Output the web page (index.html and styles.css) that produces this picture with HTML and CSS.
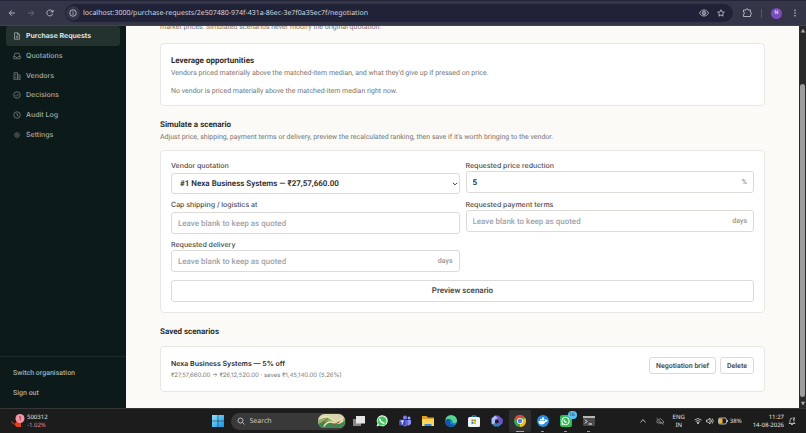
FILE: index.html
```html
<!DOCTYPE html>
<html lang="en">
<head>
<meta charset="utf-8">
<title>Negotiation</title>
<link rel="stylesheet" href="styles.css">
</head>
<body>
<header class="toolbar">
  <div class="history">
    <button class="tool" aria-label="Back"><svg class="ic8" viewBox="0 0 16 16"><path d="M14 8H2.500M8 2.500 2.500 8 8 13.500"/></svg></button>
    <button class="tool dim" aria-label="Forward"><svg class="ic8" viewBox="0 0 16 16"><path d="M2 8h11.500M8 2.500 13.500 8 8 13.500"/></svg></button>
    <button class="tool" aria-label="Reload"><svg class="ic8" viewBox="0 0 16 16"><path d="M13.500 9.500A6 6 0 1 1 12.500 4.200L14 6M14 1.500V6H9.500"/></svg></button>
  </div>
  <div class="address">
    <button class="site-info" aria-label="Site information"><svg class="ic8" viewBox="0 0 16 16"><circle cx="8" cy="8" r="6.500"/><path d="M8 7v4.500M8 4v1.500"/></svg></button>
    <input class="url" aria-label="Address" value="localhost:3000/purchase-requests/2e507480-974f-431a-86ec-3e7f0a35ec7f/negotiation">
    <button class="tool" aria-label="Page view"><svg class="ic10" viewBox="0 0 20 16"><path d="M1 8c4-8 14-8 18 0-4 8-14 8-18 0Z"/><circle cx="10" cy="8" r="3.500"/><circle cx="10" cy="8" r="1"/></svg></button>
    <button class="tool" aria-label="Bookmark"><svg class="ic8" viewBox="0 0 16 16"><path d="m8 1.500 2 4.400 4.800.5-3.600 3.200 1 4.700L8 11.900l-4.200 2.400 1-4.700L1.200 6.400 6 5.900Z"/></svg></button>
  </div>
  <button class="tool" aria-label="Extensions"><svg class="ic10" viewBox="0 0 20 20"><path d="M3 4h5V3.500a2 2 0 0 1 4 0V4h5v5a2 2 0 0 1 0 4v4H3v-4.500a2 2 0 0 0 0-4Z"/></svg></button>
  <span class="divider"></span>
  <button class="avatar" aria-label="Profile">N</button>
  <button class="tool" aria-label="Menu"><svg class="ic8 solid" viewBox="0 0 16 16"><circle cx="8" cy="2.500" r="1.500"/><circle cx="8" cy="8" r="1.500"/><circle cx="8" cy="13.500" r="1.500"/></svg></button>
</header>

<div class="app">
  <aside class="sidebar">
    <nav class="nav">
      <a class="nav-link active" href="#"><svg class="ic8" viewBox="0 0 16 16"><path d="M3 1.500h6.500L13 5v9.500H3ZM9 1.500V5.500h4M5.500 8.500h5M5.500 11.500h5"/></svg>Purchase Requests</a>
      <a class="nav-link" href="#"><svg class="ic8" viewBox="0 0 16 16"><path d="M1.500 9 4 2.500h8L14.500 9v4.500h-13ZM1.500 9h4l1 2h3l1-2h4"/></svg>Quotations</a>
      <a class="nav-link" href="#"><svg class="ic8" viewBox="0 0 16 16"><path d="M2 14.500v-13h7v13M9 6h5v8.500M1 14.500h14M4.500 5h2M4.500 8h2M4.500 11h2M11.500 9v3"/></svg>Vendors</a>
      <a class="nav-link" href="#"><svg class="ic8" viewBox="0 0 16 16"><circle cx="8" cy="8" r="6.500"/><path d="m5 8.500 2 2L11 6"/></svg>Decisions</a>
      <a class="nav-link" href="#"><svg class="ic8" viewBox="0 0 16 16"><circle cx="8" cy="8" r="6.500"/><path d="M8 4v4.500l3 1.500"/></svg>Audit Log</a>
      <a class="nav-link" href="#"><svg class="ic8 thin" viewBox="0 0 16 16"><circle cx="8" cy="8" r="4"/><circle cx="8" cy="8" r="1.500"/><path d="M8 1.500V4M8 12v2.500M1.500 8H4M12 8h2.500M3.400 3.400l1.800 1.800M10.800 10.800l1.800 1.800M3.400 12.600l1.800-1.800M10.800 5.200l1.800-1.800"/></svg>Settings</a>
    </nav>
    <div class="account">
      <button class="account-link">Switch organisation</button>
      <button class="account-link">Sign out</button>
    </div>
  </aside>

  <main class="page">
    <p class="muted intro">market prices. Simulated scenarios never modify the original quotation.</p>

    <section class="card leverage">
      <h2>Leverage opportunities</h2>
      <p class="muted">Vendors priced materially above the matched-item median, and what they'd give up if pressed on price.</p>
      <p class="muted empty">No vendor is priced materially above the matched-item median right now.</p>
    </section>

    <div class="heading">
      <h2>Simulate a scenario</h2>
      <p class="muted">Adjust price, shipping, payment terms or delivery, preview the recalculated ranking, then save if it's worth bringing to the vendor.</p>
    </div>

    <form class="card scenario">
      <div class="field spaced">
        <label for="vendor">Vendor quotation</label>
        <div class="control select-control">
          <select id="vendor"><option>#1 Nexa Business Systems — ₹27,57,660.00</option></select>
          <svg class="chevron" viewBox="0 0 10 10"><path d="m1.500 3 3.500 3.500L8.500 3"/></svg>
        </div>
      </div>
      <div class="field">
        <label for="price">Requested price reduction</label>
        <div class="control"><input id="price" value="5"><span class="unit">%</span></div>
      </div>
      <div class="field spaced">
        <label for="shipping">Cap shipping / logistics at</label>
        <div class="control"><input id="shipping" placeholder="Leave blank to keep as quoted"></div>
      </div>
      <div class="field">
        <label for="terms">Requested payment terms</label>
        <div class="control"><input id="terms" placeholder="Leave blank to keep as quoted"><span class="unit">days</span></div>
      </div>
      <div class="field">
        <label for="delivery">Requested delivery</label>
        <div class="control"><input id="delivery" placeholder="Leave blank to keep as quoted"><span class="unit">days</span></div>
      </div>
      <button class="btn preview" type="button">Preview scenario</button>
    </form>

    <h2 class="saved-title">Saved scenarios</h2>

    <section class="card saved">
      <div class="saved-text">
        <h3>Nexa Business Systems — 5% off</h3>
        <p class="muted small">₹27,57,660.00 → ₹26,12,520.00 · saves ₹1,45,140.00 (5.26%)</p>
      </div>
      <button class="btn">Negotiation brief</button>
      <button class="btn">Delete</button>
    </section>
  </main>

  <div class="scrollbar">
    <svg class="arrow" viewBox="0 0 8 8"><path d="M4 1.500 7 6.500H1Z"/></svg>
    <span class="thumb"></span>
    <svg class="arrow" viewBox="0 0 8 8"><path d="M4 6.500 7 1.500H1Z"/></svg>
  </div>
</div>

<footer class="taskbar">
  <button class="widget" aria-label="Market widget">
    <svg class="stock" viewBox="0 0 28 28"><path d="m0 13 7 7 4-5 9 1v10H11l-3-4-6-4Z" fill="#d8431b"/><circle cx="18" cy="9" r="9" fill="#f596a5"/><path d="M16 6.500 18.500 5v8" stroke="#7d2536" stroke-width="1.500" fill="none"/></svg>
    <span class="widget-text"><span>500312</span><span class="down">-1.02%</span></span>
  </button>

  <div class="apps">
    <button class="app-icon" aria-label="Start"><svg viewBox="0 0 24 24"><defs><linearGradient id="win" x2="1" y2="1"><stop stop-color="#8be3fb"/><stop offset="1" stop-color="#1593e8"/></linearGradient></defs><path fill="url(#win)" d="M0 0h11.500v11.500H0ZM12.500 0H24v11.500H12.500ZM0 12.500h11.500V24H0ZM12.500 12.500H24V24H12.500Z"/></svg></button>
    <label class="search">
      <svg class="ic8" viewBox="0 0 16 16"><circle cx="7" cy="7" r="5"/><path d="m11 11 4 4"/></svg>
      <input placeholder="Search" aria-label="Search">
      <svg class="scene" viewBox="0 0 54 28"><defs><clipPath id="pill"><rect width="54" height="28" rx="13"/></clipPath></defs><g clip-path="url(#pill)"><path fill="#d9d4b0" d="M0 0h54v28H0Z"/><path fill="#8db56a" d="M0 13Q14 3 28 10T54 8v20H0Z"/><path fill="#3f8650" d="M0 20q16-9 30-3t24-4v15H0Z"/><path d="M6 8q12-7 21 2T50 8M12 25q6-12 19-8t19-5" fill="none" stroke="#efe5b9" stroke-width="3"/><path d="m8 17 12-8M30 22l13-6" stroke="#b84430" stroke-width="2"/></g></svg>
    </label>
    <button class="app-icon" aria-label="Task view"><svg viewBox="0 0 24 24"><path fill="#858585" d="M0 8h16v14H0Z"/><path fill="#e5e5e5" d="M6 2h18v15H6Z"/></svg></button>
    <button class="app-icon" aria-label="WhatsApp"><svg viewBox="0 0 24 24"><path fill="#e5f8e9" d="m1 23 2-6a11 11 0 1 1 4 4Z"/><circle cx="12" cy="12" r="9" fill="#3fc45b"/><path d="M8 7q-1 4 3 7t6 2" fill="none" stroke="#fff" stroke-width="3"/></svg></button>
    <button class="app-icon" aria-label="Teams"><svg viewBox="0 0 24 24"><circle cx="12" cy="5" r="4" fill="#7b83eb"/><circle cx="20" cy="6" r="3" fill="#9aa0ff"/><path fill="#8b8ff3" d="M15 10h9v7q-2 5-7 4Z"/><path fill="#646de0" d="M6 10h12v8q-2 5-6 5t-6-5Z"/><rect y="9" width="13" height="12" rx="2" fill="#4047b8"/><path d="M3 12h7M6.500 12v7" stroke="#fff" stroke-width="2"/></svg></button>
    <button class="app-icon" aria-label="File Explorer"><svg viewBox="0 0 24 24"><path fill="#e39b20" d="M0 2h9l3 3h12v16H0Z"/><path fill="#ffd55d" d="M0 8h24v14H0Z"/><path fill="#318bd6" d="M5 18h14v4H5Z"/></svg></button>
    <button class="app-icon" aria-label="Edge"><svg viewBox="0 0 24 24"><circle cx="12" cy="12" r="12" fill="#148bcf"/><path fill="#59d390" d="M1 9C5-4 24-1 24 12c0 5-8 5-9 2 1-5-5-8-14-5Z"/><path fill="#1756a5" d="M1 10c6-4 11-1 9 3-1 5 5 8 11 6-7 9-23 3-20-9Z"/></svg></button>
    <button class="app-icon" aria-label="Store"><svg viewBox="0 0 24 24"><path d="M8 6V2h8v4" fill="none" stroke="#35a7e8" stroke-width="2"/><rect y="4" width="24" height="20" rx="3" fill="#eef4f8"/><path fill="#ef5130" d="M7 9h4v4H7Z"/><path fill="#7fba00" d="M12 9h4v4h-4Z"/><path fill="#00a4ef" d="M7 14h4v4H7Z"/><path fill="#ffb900" d="M12 14h4v4h-4Z"/></svg></button>
    <button class="app-icon" aria-label="Microsoft 365"><svg viewBox="0 0 24 24"><path fill="#6d55c9" d="M8 1h7l9 8-1 8-8 6-5-5 6-4-2-5-6 2Z"/><path fill="#aebdf3" d="M8 1 1 7v10l7 6 4-3-4-4V9l6-3Z"/><path fill="#347bc6" d="m8 16 5 2 10-3-8 8H8l-5-4Z"/></svg></button>
    <button class="app-icon current" aria-label="Chrome"><svg viewBox="0 0 24 24"><circle cx="12" cy="12" r="12" fill="#34a853"/><path fill="#fbbc05" d="M12 12 22.400 6A12 12 0 0 1 12 24Z"/><path fill="#ea4335" d="M12 6h10.400a12 12 0 0 0-20.800 0L7 15Z"/><circle cx="12" cy="12" r="6" fill="#fff"/><circle cx="12" cy="12" r="4.500" fill="#4285f4"/></svg></button>
    <button class="app-icon running" aria-label="Docker"><svg viewBox="0 0 24 24"><circle cx="12" cy="12" r="12" fill="#288fe0"/><path fill="#fff" d="M3 12h13q0-3 2-4 1 3 4 3-2 3-5 3-3 6-9 5-5-1-5-7ZM6 8h9v3H6ZM10 5h4v3h-4Z"/></svg></button>
    <button class="app-icon running" aria-label="WhatsApp, 16 new"><svg viewBox="0 0 24 24"><rect width="24" height="24" rx="4" fill="#2fbd56"/><circle cx="11" cy="12" r="7.500" fill="none" stroke="#fff" stroke-width="2"/><path d="m4 20 1-4M8 9q0 4 5 6" stroke="#fff" stroke-width="2.500" fill="none"/></svg><span class="badge">16</span></button>
    <button class="app-icon running" aria-label="Terminal"><svg viewBox="0 0 24 24"><rect y="2" width="24" height="20" rx="2" fill="#4a4a4a"/><path fill="#b7b7b7" d="M0 2h24v4H0Z"/><path d="m4 9 4 4-4 4M11 18h7" stroke="#fff" stroke-width="2" fill="none"/></svg></button>
  </div>

  <div class="tray">
    <svg class="ic8" viewBox="0 0 16 16"><path d="m3 11 5-6 5 6"/></svg>
    <svg class="ic8 faded" viewBox="0 0 16 16"><path d="M2 11q-2-5 3-6 4-4 7 1 4 1 3 6H4ZM1 2l14 13M5 9l5 4"/></svg>
    <span class="stack lang"><span>ENG</span><span>IN</span></span>
    <span class="status">
      <svg class="ic8" viewBox="0 0 16 16"><path d="M1 6q7-6 14 0M3.500 9q4.500-4 9 0M6 11.500q2-2 4 0L8 14Z"/></svg>
      <svg class="ic8" viewBox="0 0 16 16"><path d="M1 6h3l4-4v12l-4-4H1ZM10 5q2 3 0 6M12.500 3q4 5 0 10"/></svg>
      <span class="battery"><svg class="ic10" viewBox="0 0 20 16"><rect x="1" y="2" width="16" height="12" rx="3"/><path d="M19 6v4"/><rect x="2" y="3" width="7" height="10" fill="#eeb329" stroke="none"/></svg>38%</span>
    </span>
    <span class="stack clock"><span>11:27</span><span>14-08-2026</span></span>
    <svg class="ic8 bell" viewBox="0 0 16 16"><path d="M9 2q-5 0-5 5v4l-2 2h12l-2-2V9M6 15h4M10 2h4l-4 4h4"/></svg>
  </div>
</footer>
</body>
</html>
```
FILE: styles.css
```css
* { box-sizing: border-box; }

body {
  margin: 0;
  height: 100vh;
  display: flex;
  flex-direction: column;
  overflow: hidden;
  background: #fbfaf7;
  color: #2c2c2b;
  font: 500 7px/10px Inter, "Liberation Sans", sans-serif;
  text-rendering: geometricPrecision;
}

h2, h3, p { margin: 0; }

button, input, select {
  margin: 0;
  padding: 0;
  border: 0;
  background: none;
  color: inherit;
  font: inherit;
  text-rendering: inherit;
  min-width: 0;
}

a { color: inherit; text-decoration: none; }

svg { display: block; flex: none; }

.ic8, .ic10 {
  width: 8px;
  height: 8px;
  fill: none;
  stroke: currentColor;
  stroke-width: 1.5;
}

.ic10 { width: 10px; height: 10px; }
.thin { stroke-width: 1; }
.solid { fill: currentColor; stroke: none; }

/* Browser toolbar */
.toolbar {
  flex: none;
  height: 26px;
  display: flex;
  align-items: center;
  gap: 9px;
  padding: 0 7px 0 8px;
  background: #343648;
  border-top: 1px solid #242639;
  border-bottom: 1px solid #414351;
  color: #d3d4df;
}

.history { display: flex; gap: 11px; margin-right: 2px; }
.tool { display: flex; }
.dim { color: #777989; }

.address {
  flex: 1;
  height: 18px;
  display: flex;
  align-items: center;
  gap: 8px;
  padding: 0 8px 0 1px;
  border-radius: 9px;
  background: #202338;
}

.site-info {
  display: grid;
  place-items: center;
  width: 14px;
  height: 14px;
  border-radius: 50%;
  background: #343648;
}

.url {
  flex: 1;
  margin-left: -5px;
  padding-top: 2px;
  font: 400 7px/10px "Noto Sans", sans-serif;
}

.divider { width: 1px; height: 9px; background: #55576a; }

.avatar {
  width: 11px;
  height: 11px;
  border-radius: 50%;
  background: #7c4dbd;
  color: #f1e7ff;
  font-size: 5px;
}

/* Application */
.app { flex: 1; min-height: 0; display: flex; }

.sidebar {
  flex: none;
  width: 126px;
  display: flex;
  flex-direction: column;
  justify-content: space-between;
  background: #0c1b1a;
  color: #a5aeac;
}

.nav {
  height: 119px;
  display: flex;
  flex-direction: column;
  justify-content: space-between;
  padding: 0 6px;
}

.nav-link {
  height: 20px;
  display: flex;
  align-items: center;
  gap: 5px;
  padding: 0 7px;
  border-radius: 3px;
}

.nav-link svg { color: #7d8785; }
.nav-link.active { background: #23312f; color: #f0f3f2; font-weight: 600; }
.nav-link.active svg { color: #a5aeac; }

.account {
  display: flex;
  flex-direction: column;
  align-items: flex-start;
  gap: 10px;
  padding: 11px 13px 10px;
  border-top: 1px solid #1b2a28;
}

.account-link { font: 500 7px/10px Roboto, sans-serif; }

.page {
  flex: 1;
  min-width: 0;
  display: flex;
  flex-direction: column;
  justify-content: flex-end;
  padding: 0 34px 16px;
  overflow: hidden;
}

h2 { font: 700 8px/12px Roboto, sans-serif; }
h3 { font: 600 7px/12px Inter, sans-serif; }

.muted { color: #777773; font: 400 7px/12px Roboto, sans-serif; }
.small { font: 400 6px/12px Inter, sans-serif; }

.intro { margin-bottom: 10px; }

.card {
  flex: none;
  padding: 10px;
  border: 1px solid #e8e7e4;
  border-radius: 4px;
  background: #fff;
}

.leverage { padding: 11px 10px 8px; }
.empty { margin-top: 6px; }

.heading { margin: 13px 0 7px; }

.scenario {
  display: grid;
  grid-template-columns: 1fr 1fr;
  gap: 6px;
  color: #4b4b49;
}

.field { display: flex; flex-direction: column; }
.field.spaced { gap: 2px; }

.field label { font-size: 7px; }

.control {
  height: 22px;
  display: flex;
  align-items: center;
  padding: 0 6px;
  border: 1px solid #dcdbd7;
  border-radius: 3px;
  color: #2c2c2b;
  font: 600 8px/10px Roboto, Inter, sans-serif;
}

.control input { flex: 1; height: 100%; }
.control input::placeholder { color: #a0a3ae; opacity: 1; font-weight: 500; }

.select-control { height: 21px; padding: 0 1px 0 8px; }
.select-control select { flex: 1; height: 100%; appearance: none; }

.chevron {
  width: 6px;
  height: 6px;
  fill: none;
  stroke: #2c2c2b;
  stroke-width: 1.5;
}

.unit { color: #969690; font: 500 7px/10px Roboto, sans-serif; }

.btn {
  flex: none;
  height: 17px;
  padding: 0 6px;
  border: 1px solid #dcdbd7;
  border-radius: 3px;
  background: #fff;
  color: #4b4b49;
  font: 600 7px/10px Roboto, sans-serif;
}

.preview {
  grid-column: 1 / -1;
  height: 22px;
  margin-top: 2px;
  font: 600 8px/10px Roboto, sans-serif;
}

.saved-title { margin: 13px 0 8px; }

.saved { display: flex; gap: 4px; }
.saved-text { flex: 1; padding-top: 1px; margin-bottom: -1px; }

.scrollbar {
  flex: none;
  width: 7px;
  display: flex;
  flex-direction: column;
  align-items: center;
  padding: 1px 0;
  background: #292929;
}

.arrow { width: 6px; height: 7px; fill: #a5a5a5; }

.thumb {
  flex: 1;
  width: 5px;
  margin: 50px 0 3px;
  border-radius: 3px;
  background: #9c9c9c;
}

/* Desktop taskbar */
.taskbar {
  flex: none;
  height: 25px;
  display: grid;
  grid-template-columns: 1fr auto 1fr;
  align-items: center;
  background: #1c1c1c;
  border-top: 1px solid #363636;
  color: #e3e3e3;
  font: 400 6px/8px "Noto Sans", sans-serif;
}

.widget {
  display: flex;
  align-items: center;
  gap: 2px;
  padding-left: 11px;
  text-align: left;
}

.stock { width: 14px; height: 14px; }
.widget-text { display: flex; flex-direction: column; }
.down { color: #e58e98; }

.apps { display: flex; align-items: center; gap: 1px; }

.app-icon {
  position: relative;
  width: 22px;
  height: 22px;
  display: grid;
  place-items: center;
  border-radius: 2px;
}

.app-icon svg { width: 12px; height: 12px; }
.current { background: #303030; }

.running::after, .current::after {
  content: "";
  position: absolute;
  bottom: 0;
  width: 3px;
  height: 1px;
  background: #999;
}

.current::after { width: 8px; background: #66b9eb; }

.badge {
  position: absolute;
  top: 1px;
  right: 0;
  width: 9px;
  border-radius: 4px;
  background: #55c4f2;
  color: #143746;
  font-size: 5px;
  line-height: 8px;
}

.search {
  width: 115px;
  height: 17px;
  display: flex;
  align-items: center;
  gap: 5px;
  margin: 0 1px;
  padding: 0 1px 0 6px;
  border-radius: 9px;
  background: #393939;
}

.search input { flex: 1; padding-top: 2px; font-size: 7px; }
.search input::placeholder { color: #c7c7c7; opacity: 1; }
.scene { width: 27px; height: 14px; }

.tray {
  display: flex;
  align-items: center;
  justify-content: flex-end;
  gap: 9px;
  padding-right: 10px;
}

.faded { color: #999; }
.stack { display: flex; flex-direction: column; }
.lang { text-align: center; }
.clock { text-align: right; margin-left: 2px; }
.bell { margin-left: -5px; }
.status { display: flex; align-items: center; gap: 4px; }
.battery { display: flex; align-items: center; gap: 2px; }
```
